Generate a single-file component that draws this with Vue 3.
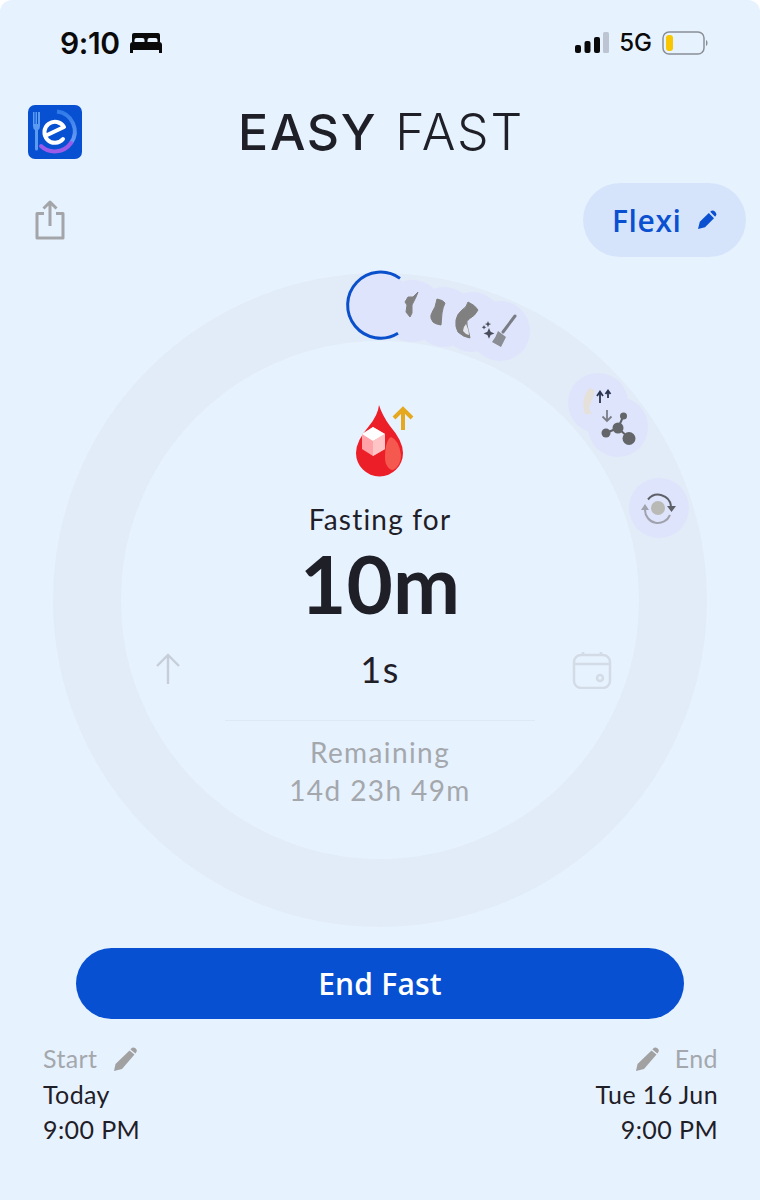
<template>
  <div class="page">
    <div class="status">
      <div class="status-left">
        <span class="clock">9:10</span>
        <svg class="bed" width="32" height="22" viewBox="0 0 32 22">
          <path d="M4 1h24a2 2 0 0 1 2 2v7h-2.500V8a2 2 0 0 0-2-2h-6a2 2 0 0 0-2 2v2h-3V8a2 2 0 0 0-2-2h-6a2 2 0 0 0-2 2v2H2V3a2 2 0 0 1 2-2z" fill="#0a0a0a"/>
          <path d="M3 10h26a3 3 0 0 1 3 3v8h-3v-3H3v3H0v-8a3 3 0 0 1 3-3z" fill="#0a0a0a"/>
        </svg>
      </div>
      <div class="status-right">
        <svg width="34" height="22" viewBox="0 0 34 22">
          <rect x="0" y="13" width="6" height="8" rx="2" fill="#0a0a0a"/>
          <rect x="9.500" y="9" width="6" height="12" rx="2" fill="#0a0a0a"/>
          <rect x="19" y="5" width="6" height="16" rx="2" fill="#0a0a0a"/>
          <rect x="28" y="0" width="6" height="21" rx="1.500" fill="#bcc5d1"/>
        </svg>
        <span class="net">5G</span>
        <svg width="46" height="24" viewBox="0 0 46 24">
          <rect x="1" y="1" width="41" height="22" rx="6" fill="none" stroke="#8a8f96" stroke-width="1.500"/>
          <rect x="4" y="4" width="7" height="16" rx="3" fill="#f8c700"/>
          <path d="M44 9c2 .6 2 5.400 0 6z" fill="#8a8f96"/>
        </svg>
      </div>
    </div>

    <header class="brand">
      <svg class="logo" width="54" height="54" viewBox="0 0 54 54">
        <defs>
          <linearGradient id="ringGrad" x1="0" y1="0" x2="0" y2="1">
            <stop offset="0" stop-color="#2f7be8"/>
            <stop offset="1" stop-color="#6d9cf5"/>
          </linearGradient>
        </defs>
        <rect width="54" height="54" rx="7" fill="#0750d2"/>
        <path d="M29 6.500A20 20 0 0 1 43 38" fill="none" stroke="url(#ringGrad)" stroke-width="4"/>
        <path d="M43 38A20 20 0 0 1 13 41" fill="none" stroke="#9a5ce8" stroke-width="4" stroke-linecap="round"/>
        <path d="M5 7h1.500v12h1V7h1.500v12h1V7H12v14q0 3-2 4v19a1.500 1.500 0 0 1-3 0V25q-2-1-2-4z" fill="#5b9bf0"/>
        <path d="M17 31l19-9a10.500 10.500 0 1 0-1 12" fill="none" stroke="#fff" stroke-width="4" stroke-linecap="round" stroke-linejoin="round"/>
      </svg>
      <h1 class="title"><b>EASY</b> <span>FAST</span></h1>
    </header>

    <div class="actions">
      <svg width="30" height="40" viewBox="0 0 30 40" fill="none" stroke="#a3a5a8" stroke-width="3">
        <path d="M9 13.500H2v24.500h26V13.500h-7" stroke-linejoin="round"/>
        <path d="M15 26V2M8.500 8.500 15 2l6.500 6.500" stroke-linejoin="round"/>
      </svg>
      <button class="plan">
        <span>Flexi</span>
        <svg width="20" height="20" viewBox="0 0 20 20">
          <path d="M1 19l1.800-7.200L11.800 3l5.200 5.200-9 9z" fill="#0a50d0"/>
          <path d="M13.200 1.800a2.900 2.900 0 0 1 4.900 4.900z" fill="#0a50d0"/>
        </svg>
      </button>
    </div>

    <section class="dial">
      <svg class="track" width="654" height="654" viewBox="53 273 654 654">
        <circle cx="380" cy="600" r="293" fill="none" stroke="#e2ecf8" stroke-width="68"/>
        <circle v-for="b in badges" :key="b.x" :cx="b.x" :cy="b.y" :r="b.r" fill="#dee4fb"/>
        <path d="M400 278.400A33 33 0 1 0 398 333.200" fill="none" stroke="#0a4fcb" stroke-width="3"/>

        <g fill="#808080" stroke="#808080" stroke-width="1" stroke-linejoin="round">
          <path d="M408 297l5 0 5-5-2 5-4 8 0 8-2 4-4-5 1-7-2-3z"/>
          <path d="M437 299q6 1 8 4-2 4-3 10l-1 12q-6-1-8-3-3-4-2-7 2-5 4-8z"/>
          <path d="M468 302q7 3 10 8-3 6-9 9-3 2-2 6 2 8 3 13-7-1-12-6-3-5-2-12 1-6 6-10 5-3 6-8z"/>
        </g>
        <path d="M466 324q3 6 3 11-4-1-6-4 0-4 3-7z" fill="#e3e6ee"/>
        <path d="M515 316l-12 16" stroke="#7a7d85" stroke-width="3" stroke-linecap="round"/>
        <path d="M498 331l8 6-5 10-9-5q4-5 6-11z" fill="#8b8d94"/>
        <path d="M489 328l1.600 3.800 3.800 1.600-3.800 1.600-1.600 3.800-1.600-3.800-3.800-1.600 3.800-1.600z" fill="#4a4e5c"/>
        <path d="M488 321l.9 2.200 2.200.9-2.200.9-.9 2.200-.9-2.200-2.200-.9 2.200-.9z" fill="#4a4e5c"/>
        <path d="M484 325l.7 1.600 1.600.7-1.600.7-.7 1.600-.7-1.600-1.600-.7 1.600-.7z" fill="#4a4e5c"/>

        <path d="M590 388q5 0 4 6-3 8-5 14 1 4 3 5-5 2-7 1-3-8-1-16 2-7 6-10z" fill="#e5e0da"/>
        <path d="M600 403v-10M597 396l3-4.500 3 4.500M608 398v-7M605.500 394l2.500-3.500 2.500 3.500" stroke="#2a3450" stroke-width="1.800" fill="none"/>
        <path d="M607 410v11M602.500 416.500l4.500 4.500 4.500-4.500" stroke="#7a7d85" stroke-width="1.800" fill="none"/>
        <path d="M618 428l5-11M618 428l-12 5M618 428l11 10" fill="none" stroke="#5f6165" stroke-width="2"/>
        <circle cx="623.500" cy="416" r="3.500" fill="#636569"/>
        <circle cx="606" cy="433" r="4.500" fill="#636569"/>
        <circle cx="618" cy="428" r="5.500" fill="#636569"/>
        <circle cx="629" cy="438.500" r="6.500" fill="#636569"/>

        <circle cx="658" cy="508" r="7" fill="#b9bab5"/>
        <path d="M648 499.500A13 13 0 0 1 671 506" fill="none" stroke="#5e6068" stroke-width="2"/>
        <path d="M667 506h9l-4.500 6z" fill="#5e6068"/>
        <path d="M670 515A13 13 0 0 1 645 510" fill="none" stroke="#a0a3ad" stroke-width="2"/>
        <path d="M641 510h8l-4-6z" fill="#a0a3ad"/>

        <path d="M379 405q3 10 11 21 13 15 13 27a23.500 23.500 0 0 1-47 0q0-12 13-27 9-11 10-21z" fill="#ec1f28"/>
        <path d="M391 437q-3 1-5 9-2 12 0 18 3 6 7 6 8-4 8-15-2-15-10-18z" fill="#f5584f"/>
        <path d="M373 427l12 7v15l-12 7-11-7v-15z" fill="#ffa3a8"/>
        <path d="M373 427l12 7-12 7-11-7z" fill="#fff"/>
        <path d="M373 441l12-7v15l-12 7z" fill="#ffc4c6"/>
        <path d="M403 430v-21M394 418 403 409l9 9" fill="none" stroke="#e5a81f" stroke-width="4"/>
      </svg>

      <div class="core">
        <p class="label">Fasting for</p>
        <p class="elapsed">10m</p>
        <div class="seconds-row">
          <svg class="up" width="26" height="32" viewBox="0 0 26 32" fill="none" stroke="#c6ced9" stroke-width="2.400">
            <path d="M13 31V2M2 13 13 2l11 11"/>
          </svg>
          <span class="seconds">1s</span>
          <svg class="cal" width="40" height="38" viewBox="0 0 40 38" fill="none" stroke="#d3dbe6" stroke-width="2.500">
            <rect x="2" y="4" width="36" height="33" rx="7"/>
            <path d="M2 13h36M11 1v3M29 1v3"/>
            <circle cx="28" cy="27" r="3"/>
          </svg>
        </div>
        <div class="rule"></div>
        <p class="remain">Remaining</p>
        <p class="remain">14d 23h 49m</p>
      </div>
    </section>

    <button class="end">End Fast</button>

    <footer class="times">
      <div class="col">
        <div class="head"><span>Start</span>
          <svg width="24" height="24" viewBox="0 0 24 24"><path d="M16.500 3.500l5 4L9 22l-8 2 1.500-7z" fill="#a1a1a1"/><path d="M18 1.800a3 3 0 0 1 5 3.900l-.6.800-5-4z" fill="#a1a1a1"/></svg>
        </div>
        <p>Today</p>
        <p>9:00 PM</p>
      </div>
      <div class="col right">
        <div class="head">
          <svg width="24" height="24" viewBox="0 0 24 24"><path d="M16.500 3.500l5 4L9 22l-8 2 1.500-7z" fill="#a1a1a1"/><path d="M18 1.800a3 3 0 0 1 5 3.900l-.6.800-5-4z" fill="#a1a1a1"/></svg>
          <span>End</span>
        </div>
        <p>Tue 16 Jun</p>
        <p>9:00 PM</p>
      </div>
    </footer>
  </div>
</template>

<script setup>
const badges = [
  { x: 381, y: 305.5, r: 32 },
  { x: 412, y: 311, r: 31 },
  { x: 444, y: 317, r: 30 },
  { x: 472, y: 322, r: 30 },
  { x: 500, y: 331, r: 30 },
  { x: 598, y: 403, r: 30 },
  { x: 618, y: 427, r: 30 },
  { x: 659, y: 508, r: 30 },
]
</script>

<style>
html, body { margin: 0; background: #fff; }
</style>

<style scoped>
.page {
  width: 760px;
  height: 1200px;
  box-sizing: border-box;
  background: #e7f2ff;
  border-radius: 12px 12px 0 0;
  font-family: Lato, "Open Sans", sans-serif;
  color: #1f2027;
  overflow: hidden;
}
p, h1 { margin: 0; font-weight: inherit; }
button { border: 0; font-family: inherit; cursor: pointer; }

.status {
  display: flex;
  justify-content: space-between;
  align-items: center;
  height: 32px;
  padding: 27px 52px 0 60px;
}
.status-left, .status-right { display: flex; align-items: center; }
.status-left { gap: 10px; }
.status-right { gap: 10px; }
.clock {
  font: 600 30px/32px Inter, sans-serif;
  letter-spacing: -.4px;
  color: #0a0a0a;
}
.net { font: 500 24px/32px Inter, sans-serif; color: #0a0a0a; }

.brand {
  position: relative;
  display: flex;
  justify-content: center;
  align-items: center;
  height: 54px;
  margin-top: 46px;
}
.logo { position: absolute; left: 28px; top: 0; }
.title {
  font-family: Inter, sans-serif;
  font-size: 50px;
  line-height: 54px;
  letter-spacing: 1.7px;
  white-space: nowrap;
  margin-left: 2px;
}
.title b { font-weight: 500; margin-right: 2px; }
.title span { font-weight: 300; }

.actions {
  display: flex;
  justify-content: space-between;
  align-items: center;
  height: 74px;
  margin-top: 24px;
  padding: 0 14px 0 35px;
}
.plan {
  display: flex;
  align-items: center;
  gap: 15px;
  height: 74px;
  width: 163px;
  padding: 0 0 0 29px;
  border-radius: 37px;
  background: #d6e4fb;
  color: #0a50d0;
  font-family: "Open Sans", sans-serif;
  font-size: 30px;
  font-weight: 600;
  letter-spacing: .6px;
}

.dial {
  position: relative;
  width: 654px;
  height: 654px;
  margin: 16px auto 0;
}
.track { position: absolute; inset: 0; overflow: visible; }
.core {
  position: relative;
  display: flex;
  flex-direction: column;
  align-items: center;
  padding-top: 227px;
}
.label {
  font-size: 28px;
  line-height: 38px;
  letter-spacing: 1.2px;
}
.elapsed {
  font-size: 80px;
  line-height: 92px;
  font-weight: 700;
  margin-top: -1px;
}
.seconds-row {
  display: grid;
  grid-template-columns: 1fr auto 1fr;
  align-items: center;
  width: 490px;
  height: 40px;
  margin: 20px 0 0;
}
.up { margin-left: 20px; }
.cal { justify-self: end; margin: 2px 13px 0 0; }
.seconds { font-size: 36px; line-height: 40px; letter-spacing: 1.4px; }
.rule {
  width: 310px;
  height: 1px;
  background: #dfe9f6;
  margin: 31px 0 12px;
}
.remain {
  font-size: 28px;
  line-height: 38px;
  letter-spacing: 1.4px;
  color: #a4a8ac;
}

.end {
  display: block;
  width: 608px;
  height: 71px;
  margin: 21px 0 0 76px;
  border-radius: 36px;
  background: #0750d2;
  color: #fff;
  font-family: "Open Sans", sans-serif;
  font-size: 30px;
  font-weight: 600;
  letter-spacing: .2px;
}

.times {
  display: flex;
  justify-content: space-between;
  margin-top: 21px;
  padding: 0 42px 0 43px;
  font-size: 25px;
  line-height: 35px;
  letter-spacing: .4px;
}
.col { display: flex; flex-direction: column; }
.right { align-items: flex-end; }
.head {
  display: flex;
  align-items: center;
  gap: 16px;
  height: 37px;
  color: #a4a8ac;
}
</style>
